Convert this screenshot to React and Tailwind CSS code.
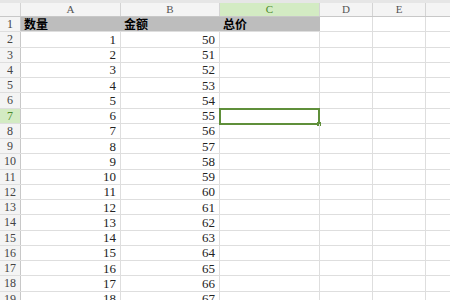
import React from 'react';

const cols = [
  { key: 'A', w: 'w-[100px]' },
  { key: 'B', w: 'w-[99px]' },
  { key: 'C', w: 'w-[100px]' },
  { key: 'D', w: 'w-[53px]' },
  { key: 'E', w: 'w-[53px]' },
  { key: 'F', w: 'w-[60px]' },
];

const rows = Array.from({ length: 19 }, (_, i) => i + 1);

const App = () => {
  return (
    <div className="w-[450px] h-[300px] overflow-hidden bg-white font-['Liberation_Serif','Noto_Sans_CJK_SC',serif] text-[13px]">
      <div className="h-[3px] bg-[#e6e6e6]" />
      {/* column headers */}
      <div className="flex h-[14px] bg-[#f4f4f4] border-b border-[#c8c8c8]">
        <div className="w-[21px] shrink-0 border-r border-[#d4d4d4]" />
        {cols.map((c) => (
          <div
            key={c.key}
            className={`${c.w} shrink-0 flex items-center justify-center leading-none text-[11px] border-r border-[#d4d4d4] ${
              c.key === 'C' ? 'bg-[#d3ebc3] text-[#4a8a2a]' : 'text-[#555]'
            }`}
          >
            {c.key === 'F' ? '' : c.key}
          </div>
        ))}
      </div>
      {rows.map((r) => {
        const sel = r === 7;
        const head = r === 1;
        return (
          <div key={r} className="flex h-[15.25px] border-b border-[#dedede]">
            <div
              className={`w-[21px] shrink-0 flex items-center justify-center leading-none text-[12px] border-r border-[#c8c8c8] ${
                sel ? 'bg-[#d3ebc3] text-[#4a8a2a]' : 'bg-[#f4f4f4] text-[#444]'
              }`}
            >
              {r}
            </div>
            {head ? (
              <>
                <div className="w-[299px] shrink-0 flex bg-[#bdbdbd] font-['Noto_Sans_CJK_SC',sans-serif] font-bold text-[12px] leading-none text-black">
                  <div className="w-[100px] flex items-center pl-[3px]">数量</div>
                  <div className="w-[99px] flex items-center pl-[3px]">金额</div>
                  <div className="w-[100px] flex items-center pl-[3px]">总价</div>
                </div>
                <div className="w-[53px] shrink-0 border-r border-[#dedede]" />
                <div className="w-[53px] shrink-0 border-r border-[#dedede]" />
                <div className="w-[60px] shrink-0" />
              </>
            ) : (
              <>
                <div className="w-[100px] shrink-0 flex items-center justify-end pr-[4px] leading-none text-[#222] border-r border-[#dedede]">
                  {r - 1}
                </div>
                <div className="w-[99px] shrink-0 flex items-center justify-end pr-[4px] leading-none text-[#222] border-r border-[#dedede]">
                  {r + 48}
                </div>
                <div className="relative w-[100px] shrink-0 border-r border-[#dedede]">
                  {sel && (
                    <div className="absolute -left-[1px] -top-[1px] w-[101px] h-[17px] border-2 border-[#5f8f3a]">
                      <div className="absolute -right-[3px] -bottom-[3px] w-[4px] h-[4px] bg-[#5f8f3a]" />
                    </div>
                  )}
                </div>
                <div className="w-[53px] shrink-0 border-r border-[#dedede]" />
                <div className="w-[53px] shrink-0 border-r border-[#dedede]" />
                <div className="w-[60px] shrink-0" />
              </>
            )}
          </div>
        );
      })}
    </div>
  );
};

export default App;
